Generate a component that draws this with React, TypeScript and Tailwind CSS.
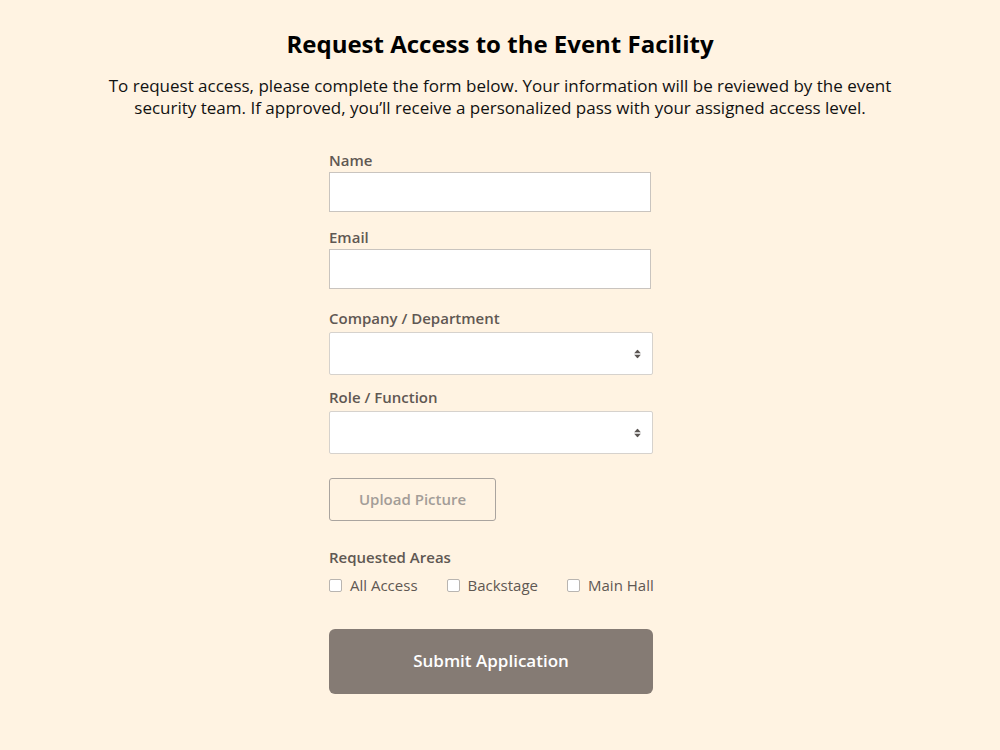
import React from 'react';

const font = { fontFamily: '"Open Sans", "Noto Sans", sans-serif' };

function Label({ children }: { children: React.ReactNode }) {
  return <label className="block text-[15px] font-semibold text-[#5f5853] leading-5">{children}</label>;
}

function SelectBox() {
  return (
    <div className="relative mt-[4px] w-[324px]">
      <select className="h-[43px] w-full appearance-none rounded-[2px] border border-[#d6d2cd] bg-white px-3 outline-none" />
      <div className="pointer-events-none absolute right-[12px] top-1/2 flex -translate-y-1/2 flex-col items-center gap-[1px]">
        <svg width="7" height="4" viewBox="0 0 7 4"><path d="M3.5 0L7 4H0z" fill="#5a5552" /></svg>
        <svg width="7" height="4" viewBox="0 0 7 4"><path d="M0 0h7L3.5 4z" fill="#5a5552" /></svg>
      </div>
    </div>
  );
}

function Check({ label }: { label: string }) {
  return (
    <label className="flex items-center gap-2 text-[15px] text-[#5f5853]">
      <span className="h-[13px] w-[13px] rounded-[2px] border border-[#b9b5b1] bg-white" />
      <span>{label}</span>
    </label>
  );
}

export default function App() {
  return (
    <div className="min-h-screen w-full bg-[#fff3e2]" style={font}>
      <main className="mx-auto pt-[28px] text-center">
        <h1 className="text-[24px] font-bold text-black leading-8">Request Access to the Event Facility</h1>
        <p className="mx-auto mt-[15px] max-w-[800px] text-[17px] leading-[22px] text-[#111]">
          To request access, please complete the form below. Your information will be reviewed by the event security team. If approved, you’ll receive a personalized pass with your assigned access level.
        </p>
      </main>

      <form className="ml-[329px] mt-[31px] w-[342px] text-left">
        <Label>Name</Label>
        <input className="mt-[2px] h-[40px] w-[322px] border border-[#c9c4bf] bg-white px-3 outline-none" />

        <div className="mt-[15px]">
          <Label>Email</Label>
          <input className="mt-[2px] h-[40px] w-[322px] border border-[#c9c4bf] bg-white px-3 outline-none" />
        </div>

        <div className="mt-[19px]">
          <Label>Company / Department</Label>
          <SelectBox />
        </div>

        <div className="mt-[12px]">
          <Label>Role / Function</Label>
          <SelectBox />
        </div>

        <button type="button" className="mt-[24px] h-[43px] w-[167px] rounded-[3px] border border-[#aaa49f] text-[15px] font-semibold text-[#a39d98]">
          Upload Picture
        </button>

        <div className="mt-[26px]">
          <Label>Requested Areas</Label>
          <div className="mt-[7px] flex items-center gap-[29px]">
            <Check label="All Access" />
            <Check label="Backstage" />
            <Check label="Main Hall" />
          </div>
        </div>

        <button type="button" className="mt-[32px] h-[65px] w-[324px] rounded-[6px] bg-[#857b74] text-[17px] font-semibold text-white">
          Submit Application
        </button>
      </form>
    </div>
  );
}
